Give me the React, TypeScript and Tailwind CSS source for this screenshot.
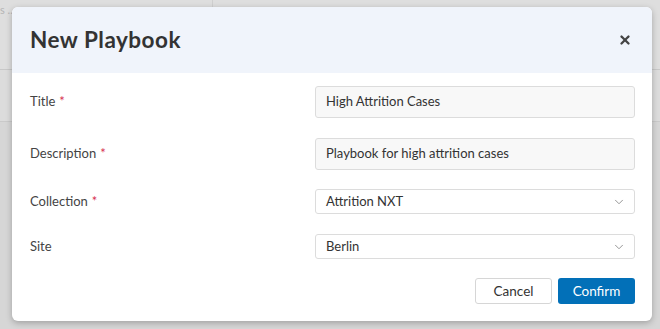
import { X, ChevronDown } from "lucide-react";

const fields = [
  { label: "Title", required: true, value: "High Attrition Cases", kind: "text" },
  { label: "Description", required: true, value: "Playbook for high attrition cases", kind: "text" },
  { label: "Collection", required: true, value: "Attrition NXT", kind: "select" },
  { label: "Site", required: false, value: "Berlin", kind: "select" },
];

export default function App() {
  return (
    <div className="relative h-[329px] w-[660px] overflow-hidden bg-[#d6d6d6] font-['Lato',sans-serif] text-[#333]">
      {/* faded page behind the overlay */}
      <div className="absolute inset-x-0 top-0 h-[70px] border-b border-[#c8c8c8] bg-[#dedede]">
        <span className="absolute left-0 top-[2px] text-[11px] text-[#b5b5b5]">s ...</span>
        <div className="absolute left-[212px] top-0 h-full border-l border-[#cfcfcf]" />
      </div>
      <div className="absolute inset-x-0 top-[70px] h-[52px] border-b border-[#cacaca] bg-[#dcdcdc]" />

      <div className="absolute left-[12px] top-[7px] flex h-[314px] w-[640px] flex-col overflow-hidden rounded-[6px] bg-white shadow-[0_2px_6px_rgba(0,0,0,0.25)]">
        <div className="flex h-[66px] shrink-0 items-center justify-between bg-[#f0f4fb] pl-[18px] pr-[20px]">
          <h2 className="text-[22.5px] font-bold tracking-[0.5px] text-[#333]">New Playbook</h2>
          <X className="h-[14px] w-[14px] text-[#444]" strokeWidth={4} />
        </div>

        <div className="flex flex-col pl-[18px] pr-[17px] pt-[13px]">
          {fields.map((f, i) => (
            <div
              key={f.label}
              className={`flex items-center justify-between ${i === 0 ? "" : i === 1 ? "mt-[20px]" : i === 2 ? "mt-[19px]" : "mt-[20px]"}`}
            >
              <span className="text-[13px] text-[#444]">
                {f.label}
                {f.required && <span className="ml-[4px] text-[#d6304f]">*</span>}
              </span>
              {f.kind === "text" ? (
                <div className="flex h-[32px] w-[320px] items-center rounded-[3px] border border-[#dcdcdc] bg-[#f8f8f8] px-[10px] text-[13px] text-[#333]">
                  {f.value}
                </div>
              ) : (
                <div className="flex h-[25px] w-[320px] items-center justify-between rounded-[3px] border border-[#dcdcdc] bg-white pl-[10px] pr-[8px] text-[13px] text-[#333]">
                  <span>{f.value}</span>
                  <ChevronDown className="h-[14px] w-[14px] text-[#888]" strokeWidth={1.5} />
                </div>
              )}
            </div>
          ))}

          <div className="mt-[19px] flex justify-end gap-[6px]">
            <button className="flex h-[26px] w-[77px] items-center justify-center rounded-[3px] border border-[#d6d6d6] bg-white text-[13.5px] text-[#333]">
              Cancel
            </button>
            <button className="flex h-[26px] w-[77px] items-center justify-center rounded-[3px] bg-[#0270b8] text-[13.5px] text-white">
              Confirm
            </button>
          </div>
        </div>
      </div>
    </div>
  );
}
